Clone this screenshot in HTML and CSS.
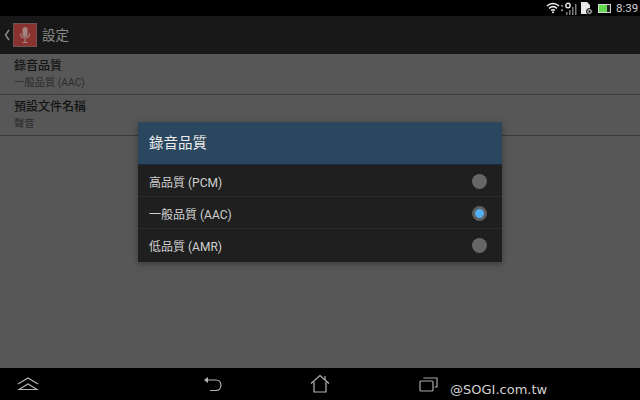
FILE: index.html
```html
<!DOCTYPE html>
<html lang="en">
<head>
    <meta charset="UTF-8">
    <title>設定</title>
    <link rel="stylesheet" href="styles.css">
</head>
<body>
    <div class="screen">
        <div class="status-bar">
            <svg class="wifi" width="14" height="12" viewBox="0 0 14 12" fill="none" stroke="#f0f0f0" stroke-width="1.500">
                <path d="M1 4C4.500 0.800 9.500 0.800 13 4"/>
                <path d="M3 6.300C5.400 4.300 8.600 4.300 11 6.300"/>
                <path d="M5 8.500C6.200 7.500 7.800 7.500 9 8.500"/>
                <circle cx="7" cy="10.300" r="1" fill="#f0f0f0" stroke="none"/>
            </svg>
            <svg class="signal" width="17" height="13" viewBox="0 0 17 13" fill="#7c7c7c">
                <path d="M1 2.500L2.500 4.500H-0.500Z" fill="#b0b0b0"/>
                <path d="M1 9.500L2.500 7.500H-0.500Z" fill="#b0b0b0"/>
                <circle cx="7" cy="3.500" r="2.200" fill="none" stroke="#e8e8e8" stroke-width="1.400"/>
                <rect x="5" y="10" width="1.500" height="3"/>
                <rect x="8" y="8" width="1.500" height="5"/>
                <rect x="11" y="5" width="1.500" height="8"/>
                <rect x="14" y="2" width="1.500" height="11"/>
            </svg>
            <svg class="sd" width="12" height="14" viewBox="0 0 12 14">
                <path d="M0 1H6L9 4V13H0Z" fill="#e8e8e8"/>
                <circle cx="8.500" cy="10.500" r="3" fill="#a0a0a0" stroke="#000"/>
                <circle cx="8.500" cy="10.500" r="1" fill="#000"/>
            </svg>
            <div class="battery"><div class="battery-level"></div></div>
            <span class="clock">8:39</span>
        </div>

        <div class="action-bar">
            <svg class="back-caret" width="6" height="12" viewBox="0 0 6 12" fill="none" stroke="#8f8f8f" stroke-width="1.400">
                <path d="M5 1L1.500 6L5 11"/>
            </svg>
            <div class="app-icon">
                <svg width="14" height="18" viewBox="0 0 14 18" fill="none" stroke="#a08480" stroke-width="1.200">
                    <rect x="4.500" y="1" width="5" height="10" rx="2.500" fill="#a08480" stroke="none"/>
                    <path d="M2.500 7.500C2.500 13.500 11.500 13.500 11.500 7.500"/>
                    <path d="M7 12.500V16M4.500 16.500H9.500"/>
                </svg>
            </div>
            <span class="action-title">設定</span>
        </div>

        <div class="settings">
            <div class="setting">
                <div class="setting-name">錄音品質</div>
                <div class="setting-value">一般品質 (AAC)</div>
            </div>
            <div class="setting">
                <div class="setting-name">預設文件名稱</div>
                <div class="setting-value">聲音</div>
            </div>
        </div>

        <div class="nav-bar">
            <svg class="nav-up" width="22" height="14" viewBox="0 0 22 14" fill="none" stroke="#b4b4b4" stroke-width="1.200">
                <path d="M1 7L11 1L21 7"/>
                <path d="M2 12.500H20L11 7Z"/>
            </svg>
            <svg class="nav-back" width="20" height="16" viewBox="0 0 20 16" fill="none" stroke="#b4b4b4" stroke-width="1.200">
                <path d="M5 4H13C19.500 4 19.500 14.500 13 14.500H7"/>
                <path d="M5 1V7L1 4Z" fill="#b4b4b4" stroke="none"/>
            </svg>
            <svg class="nav-home" width="20" height="20" viewBox="0 0 20 20" fill="none" stroke="#b4b4b4" stroke-width="1.200">
                <path d="M1 9.500L10 1.500L19 9.500"/>
                <path d="M4 8V18H16V8"/>
                <path d="M15 2V6"/>
            </svg>
            <svg class="nav-recent" width="20" height="16" viewBox="0 0 20 16" fill="none" stroke="#a8a8a8" stroke-width="1.200">
                <rect x="1" y="5" width="13" height="10" rx="1"/>
                <path d="M5 2.500V2H18V11H15.500"/>
            </svg>
            <span class="watermark">@SOGI.com.tw</span>
        </div>

        <div class="dialog">
            <div class="dialog-title">錄音品質</div>
            <div class="option">
                <span>高品質 (PCM)</span>
                <span class="radio"></span>
            </div>
            <div class="option">
                <span>一般品質 (AAC)</span>
                <span class="radio radio-on"></span>
            </div>
            <div class="option">
                <span>低品質 (AMR)</span>
                <span class="radio"></span>
            </div>
        </div>
    </div>
</body>
</html>
```

FILE: styles.css
```css
* {
    margin: 0;
    padding: 0;
    box-sizing: border-box;
}

body {
    background: #000;
    font-family: Roboto, "Noto Sans CJK TC", sans-serif;
    overflow: hidden;
}

.screen {
    width: 640px;
    height: 400px;
    display: flex;
    flex-direction: column;
    position: relative;
    background: #575757;
}

.status-bar {
    height: 16px;
    background: #000;
    display: flex;
    align-items: center;
    justify-content: flex-end;
    padding-right: 3px;
}

.wifi {
    margin-right: 1px;
}

.signal {
    margin-right: 3px;
}

.sd {
    margin-right: 5px;
}

.battery {
    width: 13px;
    height: 9px;
    border: 1px solid #d8d8d8;
    margin-right: 5px;
    background: #222;
}

.battery-level {
    width: 8px;
    height: 100%;
    background: #62d84e;
}

.clock {
    color: #d4d4d4;
    font-size: 11.500px;
    width: 21px;
}

.action-bar {
    height: 38px;
    background: #181818;
    display: flex;
    align-items: center;
    padding-left: 4px;
    gap: 3px;
}

.app-icon {
    width: 24px;
    height: 24px;
    background: #8a3230;
    border: 1px solid #6f5552;
    display: flex;
    align-items: center;
    justify-content: center;
}

.action-title {
    color: #8c8c8c;
    font-size: 13.500px;
    line-height: 16px;
    margin: 0 0 1px 2px;
}

.settings {
    flex: 1;
}

.setting {
    height: 41px;
    padding: 4px 14px 0;
    border-bottom: 1px solid #3a3a3a;
}

.setting-name {
    color: #141414;
    font-size: 12px;
    font-weight: 500;
    line-height: 17px;
}

.setting-value {
    color: #2c2c2c;
    font-size: 10.300px;
    line-height: 15px;
}

.nav-bar {
    height: 32px;
    background: #000;
    position: relative;
}

.nav-bar svg {
    position: absolute;
}

.nav-up {
    left: 17px;
    top: 9px;
}

.nav-back {
    left: 203px;
    top: 8px;
}

.nav-home {
    left: 310px;
    top: 6px;
}

.nav-recent {
    left: 419px;
    top: 8px;
}

.watermark {
    position: absolute;
    left: 450px;
    top: 14px;
    color: #d2d2d2;
    font-family: "DejaVu Sans", sans-serif;
    font-size: 13px;
}

.dialog {
    position: absolute;
    left: 138px;
    top: 122px;
    width: 364px;
    padding-bottom: 1px;
    background: #1f1f1f;
    box-shadow: 0 2px 6px rgba(0, 0, 0, 0.35);
}

.dialog-title {
    height: 43px;
    background: #2b475f;
    border-bottom: 1px solid #1a2c3b;
    color: #ececec;
    font-size: 14.500px;
    line-height: 43px;
    padding-left: 11px;
}

.option {
    height: 32px;
    display: flex;
    align-items: center;
    justify-content: space-between;
    padding: 1px 15px 0 11px;
    color: #d0d0d0;
    font-size: 12px;
    border-bottom: 1px solid #2a2a2a;
}

.option:last-child {
    border-bottom: none;
}

.radio {
    width: 15px;
    height: 15px;
    border-radius: 50%;
    background: #666;
}

.radio-on {
    background: #54aef2;
    border: 3px solid #5e5e5e;
}
```
